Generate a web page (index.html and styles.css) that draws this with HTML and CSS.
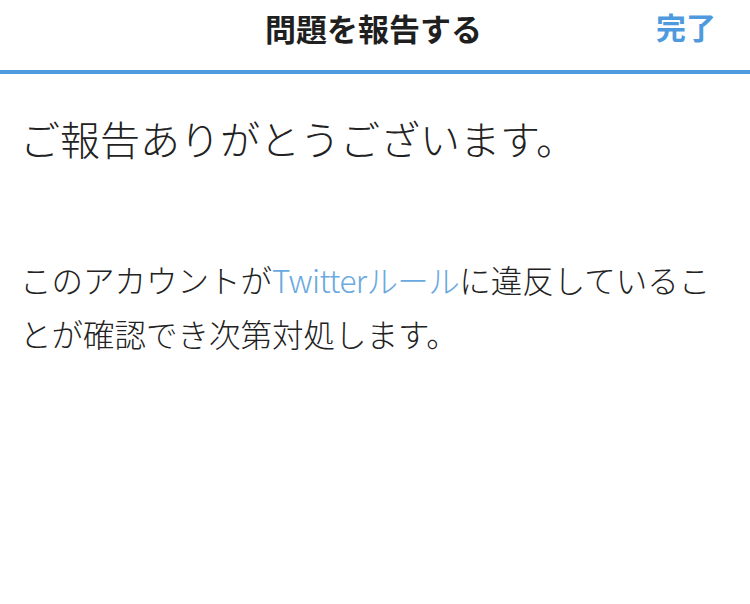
FILE: index.html
```html
<!DOCTYPE html>
<html lang="ja">
<head>
<meta charset="utf-8">
<link rel="stylesheet" href="styles.css">
</head>
<body>
<header class="nav">
  <h1 class="nav-title">問題を報告する</h1>
  <a class="nav-done">完了</a>
</header>
<main class="content">
  <h2 class="thanks">ご報告ありがとうございます。</h2>
  <p class="message">このアカウントが<a class="link">Twitterルール</a>に違反していることが確認でき次第対処します。</p>
</main>
</body>
</html>
```
FILE: styles.css
```css
* { box-sizing: border-box; }
html, body {
  margin: 0;
  padding: 0;
  background: #ffffff;
  width: 750px;
  height: 604px;
  overflow: hidden;
  font-family: "Noto Sans CJK JP", "Noto Sans", sans-serif;
  color: #2a2a2a;
}
.nav {
  position: relative;
  height: 74px;
  border-bottom: 4px solid #4f9ade;
  display: flex;
  align-items: center;
  justify-content: center;
}
.nav-title {
  margin: 0;
  font-size: 31px;
  font-weight: 700;
  color: #1f1f1f;
  line-height: 1;
  padding-bottom: 16px;
  padding-right: 3px;
}
.nav-done {
  position: absolute;
  right: 34px;
  top: 11px;
  font-size: 30px;
  font-weight: 700;
  color: #4f9ade;
  line-height: 1;
}
.content {
  padding: 0 20px;
}
.thanks {
  margin: 0;
  padding-top: 40px;
  font-size: 40px;
  font-weight: 300;
  line-height: 1.2;
  color: #222222;
}
.message {
  margin: 90px 0 0;
  font-size: 31.5px;
  font-weight: 300;
  line-height: 54px;
  color: #222222;
}
.link {
  color: #6aa9e0;
  letter-spacing: -0.6px;
}
```
